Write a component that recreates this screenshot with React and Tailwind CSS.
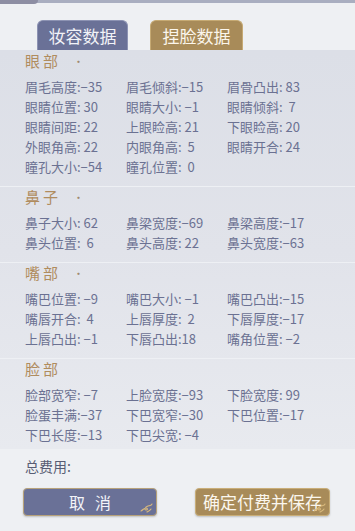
import React from "react";

const sections = [
  {
    title: "眼部",
    dot: true,
    rows: [
      ["眉毛高度:−35", "眉毛倾斜:−15", "眉骨凸出: 83"],
      ["眼睛位置: 30", "眼睛大小: −1", "眼睛倾斜:  7"],
      ["眼睛间距: 22", "上眼睑高: 21", "下眼睑高: 20"],
      ["外眼角高: 22", "内眼角高:  5", "眼睛开合: 24"],
      ["瞳孔大小:−54", "瞳孔位置:  0", ""],
    ],
  },
  {
    title: "鼻子",
    dot: true,
    rows: [
      ["鼻子大小: 62", "鼻梁宽度:−69", "鼻梁高度:−17"],
      ["鼻头位置:  6", "鼻头高度: 22", "鼻头宽度:−63"],
    ],
  },
  {
    title: "嘴部",
    dot: true,
    rows: [
      ["嘴巴位置: −9", "嘴巴大小: −1", "嘴巴凸出:−15"],
      ["嘴唇开合:  4", "上唇厚度:  2", "下唇厚度:−17"],
      ["上唇凸出: −1", "下唇凸出:18", "嘴角位置: −2"],
    ],
  },
  {
    title: "脸部",
    dot: false,
    rows: [
      ["脸部宽窄: −7", "上脸宽度:−93", "下脸宽度: 99"],
      ["脸蛋丰满:−37", "下巴宽窄:−30", "下巴位置:−17"],
      ["下巴长度:−13", "下巴尖宽: −4", ""],
    ],
  },
];

// little gold swirl sitting in the button corner
function Swirl() {
  return (
    <svg width="16" height="16" viewBox="0 0 16 16" className="absolute right-[2px] bottom-[1px]">
      <path
        d="M3 13c2-1 3-3 5-3s2 2 0 2-1-3 2-4 3 0 4-2M9 14c1-1 3-1 4-3"
        fill="none"
        stroke="#d8b97c"
        strokeWidth="1.1"
        strokeLinecap="round"
      />
    </svg>
  );
}

export default function App() {
  return (
    <div
      className="relative w-[355px] h-[531px] overflow-hidden bg-[#eef0f3]"
      style={{ fontFamily: '"Noto Sans CJK SC", "Noto Sans", sans-serif' }}
    >
      {/* top strip */}
      <div className="h-[3px] bg-[#a9aec0]" />
      <div className="absolute left-0 top-0 w-[38px] h-[4px] rounded-br-[4px] bg-[#8d8ea3]" />

      {/* tabs */}
      <div className="flex items-end h-[47px] pl-[37px] gap-[22px]">
        <div className="w-[91px] h-[30px] rounded-t-[6px] bg-[#6a7197] border-t border-x border-[#8d93b3] flex items-center justify-center text-[17px] text-[#f2f3f8]">
          妆容数据
        </div>
        <div className="w-[93px] h-[30px] rounded-t-[6px] bg-[#a88b59] border-t border-x border-[#c6aa74] flex items-center justify-center text-[17px] text-[#fbf6ec]">
          捏脸数据
        </div>
      </div>

      {/* data panel */}
      <div className="bg-gradient-to-b from-[#dcdfe7] via-[#e1e3ea] to-[#e8eaef] pt-[1px] pb-[4px]">
        {sections.map((s, i) => (
          <div key={s.title} className={i === 0 ? "" : "mt-[9px] border-t border-[#eef0f4]"}>
            <div className="h-[20px] flex items-center pl-[25px] text-[15px] text-[#b08c5e] tracking-[3px]">
              {s.title}
              {s.dot && <span className="ml-[12px] text-[11px] text-[#a08a70]">·</span>}
            </div>
            <div className="mt-[6px]">
              {s.rows.map((r, j) => (
                <div key={j} className="grid grid-cols-[101px_101px_1fr] h-[20px] items-center pl-[25px] text-[13px] text-[#6b7192] whitespace-pre">
                  {r.map((c, k) => (
                    <span key={k}>{c}</span>
                  ))}
                </div>
              ))}
            </div>
          </div>
        ))}
      </div>

      {/* footer */}
      <div className="pl-[25px] mt-[7px] h-[20px] flex items-center text-[14px] text-[#585d74]">总费用:</div>
      <div className="flex pl-[23px] gap-[38px] mt-[12px]">
        <div className="relative w-[134px] h-[28px] rounded-[4px] bg-[#6a7197] border border-[#b7a27a] flex items-center justify-center text-[16px] text-[#f3f4f9] tracking-[10px] pl-[10px] shadow-[0_1px_2px_rgba(0,0,0,0.2)]">
          取消
          <Swirl />
        </div>
        <div className="relative w-[135px] h-[28px] rounded-[4px] bg-[#a88b59] border border-[#c9ae78] flex items-center justify-center text-[17px] text-[#fbf7ee] shadow-[0_1px_2px_rgba(0,0,0,0.2)]">
          确定付费并保存
          <Swirl />
        </div>
      </div>
    </div>
  );
}
